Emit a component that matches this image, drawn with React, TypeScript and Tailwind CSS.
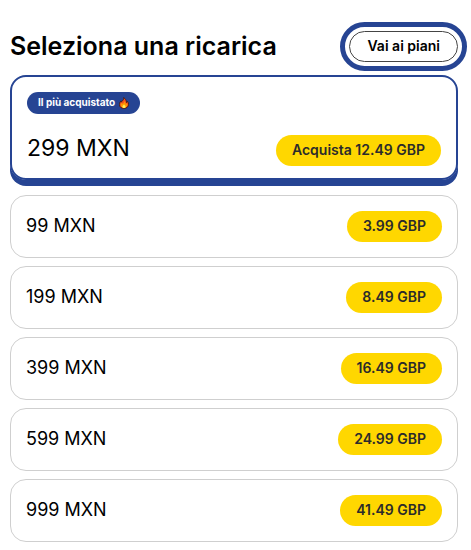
type TopUp = { amount: string; price: string };

const topUps: TopUp[] = [
  { amount: "99 MXN", price: "3.99 GBP" },
  { amount: "199 MXN", price: "8.49 GBP" },
  { amount: "399 MXN", price: "16.49 GBP" },
  { amount: "599 MXN", price: "24.99 GBP" },
  { amount: "999 MXN", price: "41.49 GBP" },
];

function Flame() {
  return (
    <svg viewBox="0 0 24 28" className="h-3 w-2.5" aria-hidden="true">
      <path
        d="M11 1c1 4-1 6-3 8-1 1-2 1-2 3-1-1-1-2-1-3-3 3-4 6-4 9 0 6 5 9 11 9s11-4 11-10c0-3-1-5-3-7 0 2-1 3-2 3 0-5-2-9-7-12z"
        fill="#f4511e"
        stroke="#3b1a12"
        strokeWidth="2"
      />
      <path
        d="M12 9c1 4-1 5-3 7-2-1-2-2-2-3-2 2-3 4-3 6 0 4 4 6 8 6s8-2 8-7c0-2-1-3-2-4 0 2-1 3-2 3 0-4-1-6-4-8z"
        fill="#ff9800"
      />
      <path d="M12 17c0 2-4 3-4 6 0 2 2 3 4 3s4-1 4-3c0-3-3-3-4-6z" fill="#ffee58" />
    </svg>
  );
}

function BuyButton({ children }: { children: string }) {
  return (
    <button
      type="button"
      className="flex h-[31px] shrink-0 items-center rounded-full bg-[#ffd700] px-4 pb-0.5 text-[14px] font-semibold text-[#2b2b2b]"
    >
      {children}
    </button>
  );
}

export default function App() {
  return (
    <main className="min-h-screen bg-white pt-[31px] pr-[13px] pb-2 pl-2.5 font-['Inter','Liberation_Sans',sans-serif] text-black">
      <header className="flex items-center justify-between">
        <h1 className="text-[25px] leading-[31px] font-semibold whitespace-nowrap">Seleziona una ricarica</h1>
        <button
          type="button"
          className="flex h-[31px] shrink-0 items-center rounded-full border border-[#444] px-[17px] pb-0.5 text-[14px] font-semibold outline-5 outline-offset-4 outline-[#264493]"
        >
          Vai ai piani
        </button>
      </header>

      <section className="mt-[13px] flex h-[105px] flex-col justify-between rounded-[16px] border-2 border-[#264493] px-[15px] pt-[15px] pb-2.5 shadow-[0_3px_0_#264493,0_6px_0_#264493]">
        <span className="flex h-[22px] items-center gap-1 self-start rounded-full bg-[#264493] px-[11px] pb-px text-[10px] font-bold text-white">
          Il più acquistato
          <Flame />
        </span>
        <div className="flex items-center justify-between">
          <span className="pb-1 text-[23px] leading-[31px]">299 MXN</span>
          <BuyButton>Acquista 12.49 GBP</BuyButton>
        </div>
      </section>

      <ul className="mt-[15px] flex flex-col gap-2">
        {topUps.map((item) => (
          <li
            key={item.amount}
            className="flex h-[63px] items-center justify-between rounded-[16px] border border-[#cfcfcf] px-[15px]"
          >
            <span className="pb-0.5 text-[18px]">{item.amount}</span>
            <BuyButton>{item.price}</BuyButton>
          </li>
        ))}
      </ul>
    </main>
  );
}
